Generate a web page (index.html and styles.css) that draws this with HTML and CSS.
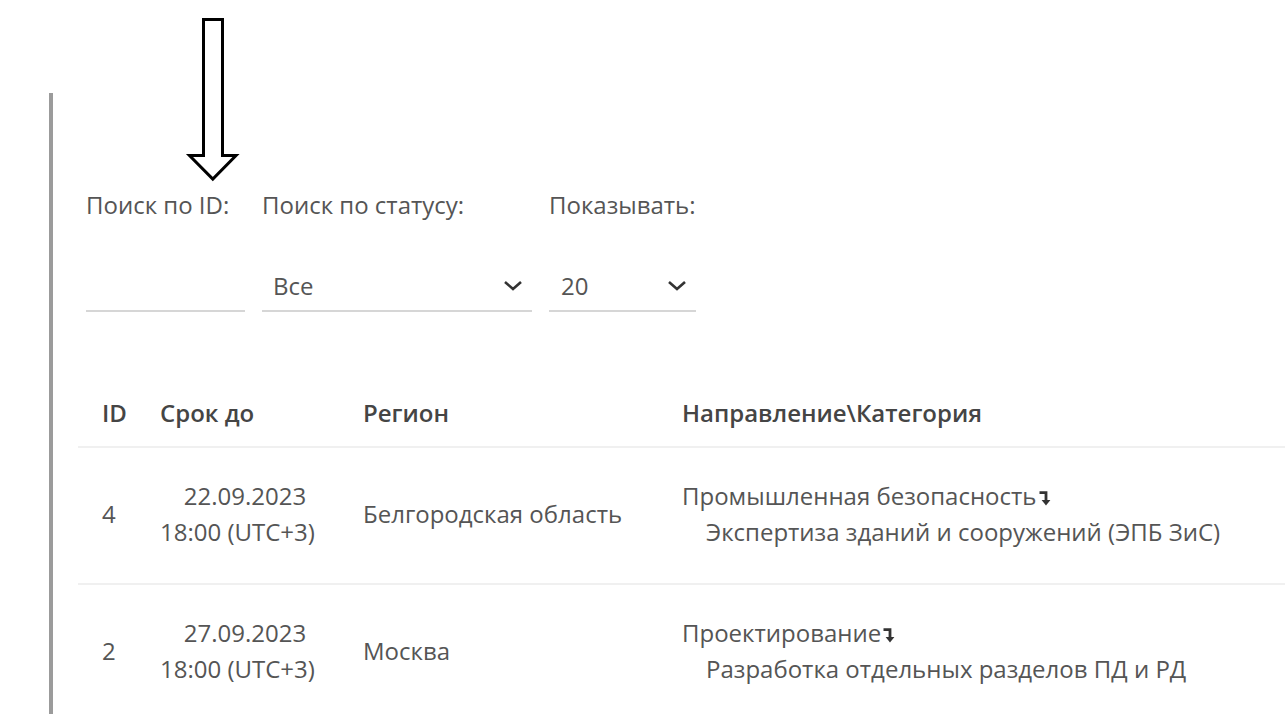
FILE: index.html
```html
<!DOCTYPE html>
<html lang="ru">
<head>
<meta charset="utf-8">
<title>Заявки</title>
<link rel="stylesheet" href="styles.css">
</head>
<body>
<svg class="pointer" width="260" height="190" viewBox="0 0 260 190" aria-hidden="true">
  <path d="M203.5 19.5 H222.5 V155.5 H236 L212.8 179 L189.5 155.5 H203.5 Z" fill="#fff" stroke="#000" stroke-width="3" stroke-linejoin="miter"/>
</svg>
<div class="panel">
  <div class="filters">
    <div class="field field-id">
      <label class="label">Поиск по ID:</label>
      <div class="control"></div>
    </div>
    <div class="field field-status">
      <label class="label">Поиск по статусу:</label>
      <div class="control select">
        <span>Все</span>
        <svg class="chev" width="20" height="11" viewBox="0 0 20 11"><path d="M2 2 L10 9 L18 2" fill="none" stroke="#333" stroke-width="2.6"/></svg>
      </div>
    </div>
    <div class="field field-count">
      <label class="label">Показывать:</label>
      <div class="control select">
        <span>20</span>
        <svg class="chev" width="20" height="11" viewBox="0 0 20 11"><path d="M2 2 L10 9 L18 2" fill="none" stroke="#333" stroke-width="2.6"/></svg>
      </div>
    </div>
  </div>

  <div class="table">
    <div class="row head">
      <div class="cell">ID</div>
      <div class="cell">Срок до</div>
      <div class="cell">Регион</div>
      <div class="cell">Направление\Категория</div>
    </div>
    <div class="row">
      <div class="cell mid">4</div>
      <div class="cell mid"><div class="date"><div class="d1">22.09.2023</div><div>18:00 (UTC+3)</div></div></div>
      <div class="cell mid">Белгородская область</div>
      <div class="cell">
        <div>Промышленная безопасность<svg class="lvl" width="12" height="15" viewBox="0 0 12 15"><path d="M0.5 1.7 H7 V10" fill="none" stroke="#333" stroke-width="2.8"/><path d="M2.6 9 H11.4 L7 14.6 Z" fill="#333"/></svg></div>
        <div class="sub">Экспертиза зданий и сооружений (ЭПБ ЗиС)</div>
      </div>
    </div>
    <div class="row last">
      <div class="cell mid">2</div>
      <div class="cell mid"><div class="date"><div class="d1">27.09.2023</div><div>18:00 (UTC+3)</div></div></div>
      <div class="cell mid">Москва</div>
      <div class="cell">
        <div>Проектирование<svg class="lvl" width="12" height="15" viewBox="0 0 12 15"><path d="M0.5 1.7 H7 V10" fill="none" stroke="#333" stroke-width="2.8"/><path d="M2.6 9 H11.4 L7 14.6 Z" fill="#333"/></svg></div>
        <div class="sub">Разработка отдельных разделов ПД и РД</div>
      </div>
    </div>
  </div>
</div>
</body>
</html>
```
FILE: styles.css
```css
html, body {
  margin: 0;
  padding: 0;
  background: #fff;
  overflow: hidden;
}
body {
  font-family: "Open Sans", "Noto Sans", sans-serif;
  font-size: 24px;
  color: #555;
  width: 1285px;
  height: 724px;
}
.pointer {
  position: absolute;
  left: 0;
  top: 0;
}
.panel {
  margin-top: 93px;
  margin-left: 49px;
  height: 621px;
  border-left: 4px solid #9b9b9b;
  padding-left: 25px;
  box-sizing: border-box;
}
.filters {
  display: flex;
  gap: 17px;
  padding-top: 97px;
  padding-left: 8px;
}
.field {
  display: flex;
  flex-direction: column;
}
.field-id { width: 159px; }
.field-status { width: 270px; }
.field-count { width: 147px; }
.label {
  line-height: 30px;
  white-space: nowrap;
  color: #555;
}
.control {
  margin-top: 42px;
  height: 50px;
  border-bottom: 2px solid #d6d6d6;
  box-sizing: border-box;
}
.select {
  display: flex;
  align-items: center;
  justify-content: space-between;
  padding: 0 9px 2px 11px;
  color: #555;
}
.field-count .select { padding-left: 12px; }
.chev { display: block; }
.table {
  margin-top: 70px;
  margin-right: -40px;
}
.row {
  display: grid;
  grid-template-columns: 58px 203px 319px 1fr;
  padding-left: 12px;
  border-bottom: 2px solid #f0f0f0;
  line-height: 36px;
  padding-top: 30px;
  padding-bottom: 33px;
}
.row.last {
  border-bottom-color: transparent;
}
.row.head {
  padding-top: 13px;
  padding-bottom: 15px;
  font-weight: 600;
  color: #454545;
}
.cell {
  padding: 0 12px;
  white-space: nowrap;
}
.mid {
  display: flex;
  align-items: center;
}
.date {
  text-align: center;
}
.d1 { padding-left: 15px; }
.sub { padding-left: 24px; }
.lvl {
  display: inline-block;
  vertical-align: -1px;
  margin-left: 2px;
}
```
